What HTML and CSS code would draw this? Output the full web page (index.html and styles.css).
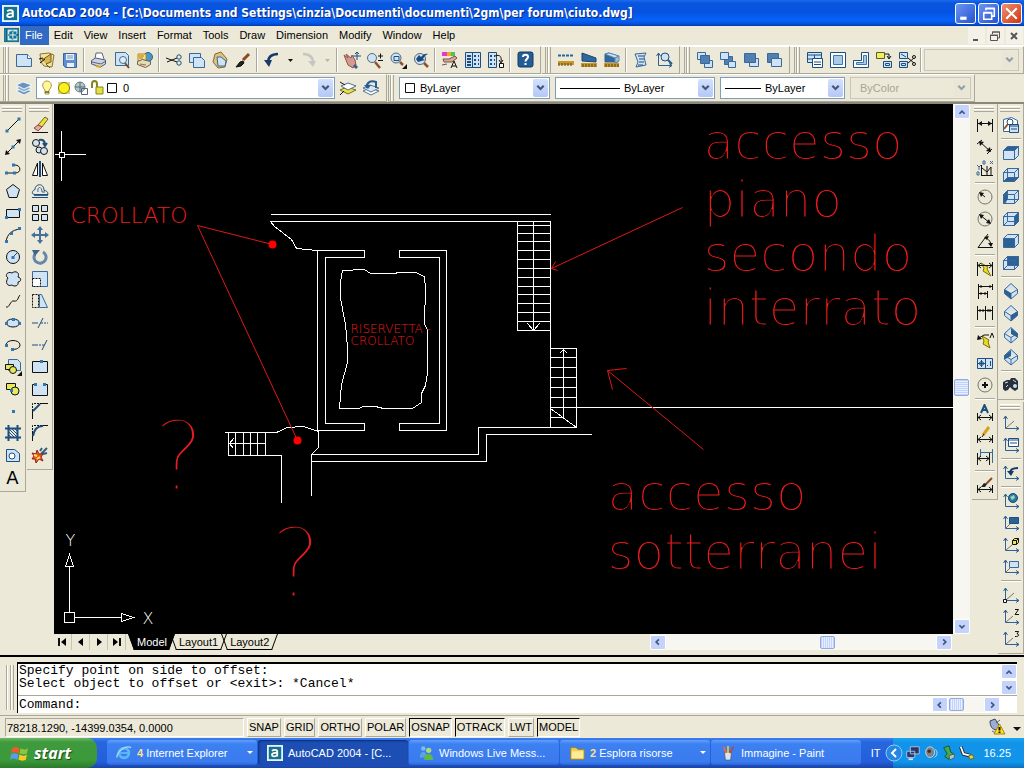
FILE: index.html
```html
<!DOCTYPE html>
<html lang="en">
<head>
<meta charset="utf-8">
<title>AutoCAD 2004 - ciuto.dwg</title>
<link rel="stylesheet" href="styles.css">
</head>
<body>
<svg class="defs" aria-hidden="true">
  <defs>
    <symbol id="down" viewBox="0 0 14 16"><path d="M4 6l3 3 3-3" class="chev"/></symbol>
    <symbol id="acad" viewBox="0 0 18 18"><rect x="1" y="1" width="16" height="16" fill="#16718c" stroke="#e4f6fa" stroke-width="2"/><path d="M5.500 6.500c2-1.500 6-1.500 6 1v5.500M11.500 9c-3-.5-6 0-6 2s4 2.500 6 .5" stroke="#fff" stroke-width="2" fill="none"/></symbol>
    <symbol id="axes" viewBox="0 0 18 18"><path d="M3.500 2v12.500H17M1.500 5l2-3 2 3M14 12.500l3 2-3 2" class="steel"/></symbol>
    <symbol id="dimline" viewBox="0 0 18 18"><path d="M1.500 9v8M16.500 9v8M2 13.500h14M5 11l-3 2.500L5 16M13 11l3 2.500-3 2.500" class="ink"/></symbol>
    <symbol id="cube" viewBox="0 0 18 18"><path d="M1.500 6.500l4-4h11v9l-4 4h-11zM1.500 6.500h11v9M12.500 6.500l4-4M5.500 3v8.500l-4 4M5.500 11.500h11" class="blue"/></symbol>
    <symbol id="iso" viewBox="0 0 18 18"><path d="M9 1.500l6.500 6v4L9 17l-6.500-5.500v-4zM2.500 7.500L9 11.500l6.500-4M9 11.500V17" class="blue sky"/></symbol>
  </defs>
</svg>

<header class="titlebar">
  <svg class="i" viewBox="0 0 18 18"><use href="#acad"/></svg>
  <h1>AutoCAD 2004 - [C:\Documents and Settings\cinzia\Documenti\documenti\2gm\per forum\ciuto.dwg]</h1>
  <div class="winbtns">
    <button aria-label="Minimize"><svg viewBox="0 0 18 18"><path d="M4 13.500h6" stroke="#fff" stroke-width="3"/></svg></button>
    <button aria-label="Restore"><svg viewBox="0 0 18 18"><path d="M6.500 6V4.500h8v7H12M4 8.500h8v6H4.500v-6M6 4h9M4 8h8" stroke="#fff" fill="none" stroke-width="1.500"/></svg></button>
    <button class="close" aria-label="Close"><svg viewBox="0 0 18 18"><path d="M4 4l10 10M14 4L4 14" stroke="#fff" stroke-width="2"/></svg></button>
  </div>
</header>

<nav class="menubar">
  <svg class="i" viewBox="0 0 18 18"><rect x="1" y="2" width="15" height="14" fill="#d6edf4" stroke="#1d7690" stroke-width="2"/><path d="M3 2v14M9.500 4v10M5 9h11" stroke="#0e6686" stroke-width="2"/><rect x="6" y="5" width="8" height="8" fill="#137493"/><path d="M10 5v8M6 9h8" stroke="#fff"/></svg>
  <button class="on">File</button><button>Edit</button><button>View</button><button>Insert</button><button>Format</button><button>Tools</button><button>Draw</button><button>Dimension</button><button>Modify</button><button>Window</button><button>Help</button>
  <div class="docbtns">
    <button aria-label="Minimize drawing"><svg viewBox="0 0 16 16"><path d="M5 12h5" stroke="#555" stroke-width="2"/></svg></button>
    <button aria-label="Restore drawing"><svg viewBox="0 0 16 16"><path d="M5.500 6V4h7v6H11M3.500 7.500h7v5h-7zM3 7h8M5 4h8" stroke="#555" fill="none"/></svg></button>
    <button aria-label="Close drawing"><svg viewBox="0 0 16 16"><path d="M5 5l6 6M11 5l-6 6" stroke="#555" stroke-width="2"/></svg></button>
  </div>
</nav>

<div class="dock">
  <div class="bar">
    <i class="grip"></i>
    <button class="t" aria-label="New"><svg viewBox="0 0 18 18"><path d="M1.500 3.500h11l4 4v8h-15z" class="blue sky"/><path d="M12.500 3.500v4h4" class="blue white"/></svg></button>
    <button class="t" aria-label="Open"><svg viewBox="0 0 18 18"><path d="M2 3l9-1 5 2-2 12-8-1-3-4z" fill="#f3e2a0" stroke="#8a7330"/><path d="M4 9l9-6v8l-5 2 4 4" fill="#d8b64c" stroke="#6d5a20"/><path d="M1 8l4-1M2 12l5-4" class="ink"/></svg></button>
    <button class="t" aria-label="Save"><svg viewBox="0 0 18 18"><path d="M2.500 2.500h13v14h-11l-2-2z" fill="#5f8fd0" stroke="#3d619b"/><path d="M5 3h8v6H5zM6 12h7v4H6z" fill="#e8f1fb"/><path d="M6 5h6M6 7h6" stroke="#6c92c8"/></svg></button>
    <i class="sep"></i>
    <button class="t" aria-label="Plot"><svg viewBox="0 0 18 18"><path d="M5 8l1-6h6l2 6" class="slate white"/><path d="M1.500 9.500l4-2.500 10 2v4l-5 3-9-3z" fill="#cfd2e0" stroke="#4f5a7c"/><path d="M2 11l9 2 5-3" class="slate"/><path d="M6 15l5 1" stroke="#d4a820" stroke-width="2"/></svg></button>
    <button class="t" aria-label="Plot Preview"><svg viewBox="0 0 18 18"><path d="M2.500 1.500h10l3 3v10h-13z" class="blue sky"/><circle cx="10" cy="9" r="3.500" fill="#dbeefa" stroke="#49708e"/><path d="M12 12l4 5" stroke="#704a30" stroke-width="2"/></svg></button>
    <button class="t" aria-label="Publish"><svg viewBox="0 0 18 18"><circle cx="12" cy="6" r="4.500" fill="#4c98c8" stroke="#27638f"/><path d="M2 3h8v7H2z" fill="#ffe681" stroke="#ad8420"/><path d="M1.500 10.500l5-2 8 2v3l-5 3-8-3z" fill="#e5dcb2" stroke="#5b6070"/><path d="M3 5h5M3 7h4M4 13l6 1" stroke="#bb6918"/></svg></button>
    <i class="sep"></i>
    <button class="t" aria-label="Cut"><svg viewBox="0 0 18 18"><path d="M1 7l11 4M2 11l10-4" class="ink"/><circle cx="14" cy="6" r="2.200" class="navy"/><circle cx="14" cy="12" r="2.200" class="navy"/></svg></button>
    <button class="t" aria-label="Copy"><svg viewBox="0 0 18 18"><path d="M1.500 2.500h11v9h-11z" class="blue sky"/><path d="M5.500 6.500h8l3 3v7h-11z" class="blue sky"/></svg></button>
    <button class="t" aria-label="Paste"><svg viewBox="0 0 18 18"><path d="M4 3l6-2 6 7-2 8-7 1-5-6z" fill="#dfc17a" stroke="#806b36"/><path d="M6 6h4l5 4-1 5H7z" class="blue sky"/></svg></button>
    <button class="t" aria-label="Match Properties"><svg viewBox="0 0 18 18"><path d="M9 9l6-6" stroke="#8a4a22" stroke-width="3"/><path d="M2 16l4-5 3-1 1 2-3 3z" class="ink" fill="#222"/></svg></button>
    <i class="sep"></i>
    <button class="t" aria-label="Undo"><svg viewBox="0 0 18 18"><path d="M5 12c0-6 4-9 10-9" stroke="#173b69" stroke-width="2.500" fill="none"/><path d="M1 9h8l-3 7z" fill="#173b69"/></svg></button>
    <button class="t slim" aria-label="Undo list"><svg viewBox="0 0 10 18"><path d="M3 8h5l-2.500 3z" fill="#111"/></svg></button>
    <button class="t" aria-label="Redo" disabled><svg viewBox="0 0 18 18"><path d="M3 3c6 0 10 3 10 9" stroke="#c6c6c0" stroke-width="2.500" fill="none"/><path d="M8 10h8l-3 6z" fill="#c6c6c0"/></svg></button>
    <button class="t slim" aria-label="Redo list" disabled><svg viewBox="0 0 10 18"><path d="M3 8h5l-2.500 3z" fill="#b8b6a8"/></svg></button>
    <i class="sep"></i>
    <button class="t" aria-label="Pan"><svg viewBox="0 0 18 18"><path d="M1 4l4 3-2-4 5 4 1-3 3 5 1 5-3 3-5-3z" fill="#d49a92" stroke="#925248"/><path d="M14 1v8M10 5h8M12 3l2-2 2 2" class="navy"/><path d="M11 14l3 3" stroke="#385f89" stroke-width="3"/></svg></button>
    <button class="t" aria-label="Zoom Realtime"><svg viewBox="0 0 18 18"><circle cx="6" cy="7" r="4.500" class="slate sky"/><path d="M9 11l5 6" stroke="#8b522d" stroke-width="2.500"/><path d="M12 5h5M14.500 2.500v5M12 9.500h5" class="ink"/></svg></button>
    <button class="t" aria-label="Zoom Window"><svg viewBox="0 0 18 18"><circle cx="7" cy="7" r="5" class="slate sky"/><path d="M5 5.500h5v4H5z" class="navy"/><path d="M11 11l3 3" stroke="#8b522d" stroke-width="2.500"/><path d="M18 13v5h-5z" fill="#111"/></svg></button>
    <button class="t" aria-label="Zoom Previous"><svg viewBox="0 0 18 18"><circle cx="8" cy="8" r="5.500" class="slate sky"/><path d="M4 8l3-4 2 2c2-3 5-4 7-3-3 1-4 3-5 5l2 1-7 2z" fill="#1c477b"/><path d="M12 12l4 4" stroke="#8b522d" stroke-width="2.500"/></svg></button>
    <i class="sep"></i>
    <button class="t" aria-label="Properties"><svg viewBox="0 0 18 18"><path d="M1 1h5v4H1z" fill="#e23ad0"/><path d="M6 1h4v4H6z" fill="#f3a420"/><path d="M10 1h4v4h-4z" fill="#49c65b"/><path d="M2 8h6l6-3 2 2-5 4H3zM1 14l5-1" fill="#dba798" stroke="#7a5048"/><path d="M10 17l3-7 3 7M11 15h4" class="ink"/></svg></button>
    <button class="t" aria-label="DesignCenter"><svg viewBox="0 0 18 18"><path d="M1.500 1.500h15v15h-15zM8.500 2v14" class="navy sky"/><path d="M3 5h4M3 8h4M3 11h4M3 14h4M10 5h2M14 5h1M10 9h2M14 9h1M10 13h2M14 13h1" class="navy w2"/></svg></button>
    <button class="t" aria-label="Tool Palettes"><svg viewBox="0 0 18 18"><path d="M1.500 1.500h8v15h-8z" class="navy sky"/><path d="M3 5h2M7 5h1M3 9h2M7 9h1M3 13h2M7 13h1" class="navy w2"/><path d="M8 5c5-2 7 1 6 6M12 9l2 3 2-3" class="ink"/><path d="M12.500 12.500h4v4h-4z" class="ink white"/></svg></button>
    <i class="sep"></i>
    <button class="t" aria-label="Help"><svg viewBox="0 0 18 18"><rect x="2" y="1" width="15" height="15" rx="2" fill="#235d94" stroke="#123a63"/><path d="M7 6c0-3 5-3 5 0 0 2-2.500 2-2.500 4.500M9.500 12v2" stroke="#fff" stroke-width="2" fill="none"/></svg></button>
  </div>
  <div class="bar">
    <i class="grip"></i>
    <button class="t" aria-label="Distance"><svg viewBox="0 0 18 18"><path d="M1 4.500h16" stroke="#2a6498" stroke-width="2" stroke-dasharray="3 1"/><path d="M1 10h16v4H1z" fill="#c8982c"/><path d="M2 12v3M5 12v3M8 12v3M11 12v3M14 12v3" stroke="#5e430c"/></svg></button>
    <button class="t" aria-label="Area"><svg viewBox="0 0 18 18"><path d="M2 10V2l14 5v4z" fill="#2f679f" stroke="#1b456f"/><path d="M1 12h16v4H1z" fill="#c8982c"/><path d="M3 13v3M6 13v3M9 13v3M12 13v3M15 13v3" stroke="#5e430c"/></svg></button>
    <button class="t" aria-label="Mass Properties"><svg viewBox="0 0 18 18"><path d="M2 11V3l4-1 9 3v6z" fill="#2f679f" stroke="#365f88"/><path d="M2 3l4-1 10 3-4 2z" fill="#cfe3f4" stroke="#5f88ae"/><path d="M12 7l4-2v5l-4 2z" fill="#9cc1e0" stroke="#5f88ae"/><path d="M1 12h15v4H1z" fill="#c8982c"/><path d="M3 13v3M6 13v3M9 13v3M12 13v3M15 13v3" stroke="#5e430c"/></svg></button>
    <i class="sep"></i>
    <button class="t" aria-label="List"><svg viewBox="0 0 18 18"><path d="M3 3l11-1-2 4 2 8-10 2 2-5z" class="blue sky"/><path d="M6 5h6M7 8h5M7 11h5M6 14h5" class="navy"/></svg></button>
    <button class="t" aria-label="Locate Point"><svg viewBox="0 0 18 18"><use href="#axes"/><circle cx="10" cy="6" r="4" class="navy sky"/><path d="M13 9l4 4" stroke="#245887" stroke-width="2"/></svg></button>
  </div>
  <div class="bar">
    <i class="grip"></i>
    <button class="t" aria-label="Bring to Front"><svg viewBox="0 0 18 18"><path d="M1.500 1.500h8v7h-8zM8.500 9.500h8v7h-8z" class="blue sky"/><path d="M4.500 4.500h9v8h-9z" class="blue steelf"/></svg></button>
    <button class="t" aria-label="Send to Back"><svg viewBox="0 0 18 18"><path d="M5.500 5.500h8v8h-8z" class="blue steelf"/><path d="M1.500 1.500h8v7h-8zM9.500 10.500h7v6h-7z" class="blue sky"/></svg></button>
    <button class="t" aria-label="Bring Above"><svg viewBox="0 0 18 18"><path d="M7.500 7.500h9v8h-9z" class="blue sky"/><path d="M2.500 2.500h11v9h-11z" class="blue steelf"/></svg></button>
    <button class="t" aria-label="Send Under"><svg viewBox="0 0 18 18"><path d="M2.500 2.500h11v9h-11z" class="blue steelf"/><path d="M6.500 7.500h10v8h-10z" class="blue sky"/></svg></button>
  </div>
  <div class="bar grow">
    <i class="grip"></i>
    <button class="t" aria-label="Viewports Dialog"><svg viewBox="0 0 18 18"><path d="M1.500 1.500h14v10h-14zM1.500 4h14M8.500 4v7M1.500 8h7" class="navy sky"/><path d="M6.500 7.500h10v9h-10z" class="navy white"/><path d="M8 11h7M8 13.500h7" class="navy"/></svg></button>
    <button class="t" aria-label="Single Viewport"><svg viewBox="0 0 18 18"><path d="M1.500 1.500h15v15h-15z" class="navy white"/><path d="M4.500 4.500h9v9h-9z" fill="#a9cbe8" stroke="#3d77ab"/></svg></button>
    <button class="t" aria-label="Polygonal Viewport"><svg viewBox="0 0 18 18"><path d="M9.500 1.500h7v15h-15v-7h8z" class="navy white"/><path d="M11.500 4.500h3v9h-10v-2h7z" fill="#a9cbe8" stroke="#3d77ab"/></svg></button>
    <button class="t" aria-label="Convert to Viewport"><svg viewBox="0 0 18 18"><path d="M1.500 1.500h8v6h-8z" fill="#f2ee62" stroke="#55601c"/><path d="M10 3h4v4M12 5l2 3 2-3" class="ink"/><path d="M8.500 10.500h8v6h-8zM10.500 12.500h4v2h-4z" class="navy sky"/></svg></button>
    <button class="t" aria-label="Clip Viewport"><svg viewBox="0 0 18 18"><path d="M1.500 1.500h8v6h-8zM1.500 10.500h8v6h-8zM3.500 12.500h4v2h-4zM3 3l5 3" class="navy sky"/><path d="M10 7l6 5M10 12l6-5" class="ink"/><circle cx="16" cy="6" r="1.500" class="ink"/><circle cx="16" cy="13" r="1.500" class="ink"/></svg></button>
    <i class="sep"></i>
    <span class="combo off grow"><select disabled aria-label="Viewport scale"><option></option></select><svg class="arrow"><use href="#down"/></svg></span>
  </div>
</div>

<div class="dock second">
  <div class="bar">
    <i class="grip"></i>
    <button class="t" aria-label="Layer Properties"><svg viewBox="0 0 18 18"><path d="M1 12l7-3 9 3-8 4z" fill="#6e97bf" stroke="#f3f6f8"/><path d="M1 9l7-3 9 3-8 4z" fill="#8eb0cf" stroke="#f3f6f8"/><path d="M1 6l7-3 9 3-8 4z" fill="#6a94be" stroke="#f3f6f8"/></svg></button>
    <span class="combo layer">
      <svg class="lead" viewBox="0 0 78 18"><path d="M4 11c-5-5-1-9 2-9s7 4 2 9v4H4z" fill="#fff79a" stroke="#a89b3d"/><path d="M4 13h4" class="ink"/><path d="M17 3h12v12H17z" fill="#d9d77a"/><circle cx="23" cy="9" r="5.500" fill="#fff11c" stroke="#7f7a2b"/><circle cx="39" cy="8" r="5" fill="#b4cbc4" stroke="#668379"/><path d="M39 3v10M34 8h10M40.500 9.500h6v6h-6z" class="slate"/><path d="M51 9V5c0-4 5-4 5 0v4" fill="none" stroke="#85851e" stroke-width="2"/><path d="M55 8h7v7h-7z" fill="#e4e140" stroke="#85851e"/><path d="M66.500 4.500h9v9h-9z" class="ink white"/></svg>
      <select aria-label="Layer"><option>0</option></select><svg class="arrow"><use href="#down"/></svg>
    </span>
    <button class="t" aria-label="Make Object's Layer Current"><svg viewBox="0 0 18 18"><path d="M1 11l7-3 9 3-8 4z" fill="#e8df49" stroke="#756f24"/><path d="M2 7l7-3 8 3-8 4z" fill="#fff" stroke="#507089"/><path d="M1 3l5 3M1 16l4-4" class="ink"/></svg></button>
    <button class="t" aria-label="Layer Previous"><svg viewBox="0 0 18 18"><path d="M1 12l7-3 9 3-8 4z" fill="#fff" stroke="#547594"/><path d="M1 9l7-3 9 3-8 4z" fill="#d8e6f2" stroke="#547594"/><path d="M5 9C4 4 8 1 14 3v6" stroke="#245d96" stroke-width="2" fill="none"/><path d="M2 6h7l-3 4z" fill="#245d96"/></svg></button>
  </div>
  <div class="bar props">
    <i class="grip"></i>
    <span class="combo color"><svg class="lead" viewBox="0 0 12 18"><path d="M1.500 4.500h9v9h-9z" class="ink white"/></svg><select aria-label="Color"><option>ByLayer</option></select><svg class="arrow"><use href="#down"/></svg></span>
    <span class="combo ltype"><i class="rule"></i><select aria-label="Linetype"><option>ByLayer</option></select><svg class="arrow"><use href="#down"/></svg></span>
    <span class="combo lweight"><i class="rule"></i><select aria-label="Lineweight"><option>ByLayer</option></select><svg class="arrow"><use href="#down"/></svg></span>
    <span class="combo off plot"><select disabled aria-label="Plot style"><option>ByColor</option></select><svg class="arrow"><use href="#down"/></svg></span>
  </div>
</div>

<main class="work">
  <div class="rail">
    <div class="vbar">
      <i class="grip"></i>
      <button class="t" aria-label="Line"><svg viewBox="0 0 18 18"><path d="M3 15L15 3" class="ink"/><path d="M1.500 13.500h3v3h-3zM13.500 1.500h3v3h-3z" class="dot"/></svg></button>
      <button class="t" aria-label="Construction Line"><svg viewBox="0 0 18 18"><path d="M2 16L16 2" class="ink"/><path d="M1 17l1-5 4 4zM17 1l-5 1 4 4z" fill="#111"/><path d="M7.500 7.500h3v3h-3z" class="dot"/></svg></button>
      <button class="t" aria-label="Polyline"><svg viewBox="0 0 18 18"><path d="M2 13h9c7 0 6-8 0-8H9" class="ink"/><path d="M1 11.500h3v3H1zM9 11.500h3v3H9zM8 3.500h3v3H8z" class="dot"/></svg></button>
      <button class="t" aria-label="Polygon"><svg viewBox="0 0 18 18"><path d="M9 2.500l6.500 5-2.500 8H5l-2.500-8z" class="ink sky"/></svg></button>
      <button class="t" aria-label="Rectangle"><svg viewBox="0 0 18 18"><path d="M2.500 5.500h13v8h-13z" class="ink sky"/><path d="M1 12h3v3H1zM14 4h3v3h-3z" class="dot"/></svg></button>
      <button class="t" aria-label="Arc"><svg viewBox="0 0 18 18"><path d="M2 16C3 8 8 4 16 3" class="ink"/><path d="M1 14h3v3H1zM6 6h3v3H6zM14 1h3v3h-3z" class="dot"/></svg></button>
      <button class="t" aria-label="Circle"><svg viewBox="0 0 18 18"><circle cx="9" cy="9" r="6.500" class="ink sky"/><path d="M9 9l4-4" class="navy"/><path d="M7.500 8h3v3h-3z" class="dot"/></svg></button>
      <button class="t" aria-label="Revision Cloud"><svg viewBox="0 0 18 18"><path d="M4 8c-4-3 0-7 4-5 4-3 8 0 6 4 4 1 3 5 0 5 1 4-4 5-6 3-5 2-7-3-4-7z" class="ink sky"/></svg></button>
      <button class="t" aria-label="Spline"><svg viewBox="0 0 18 18"><path d="M2 15c4 1 4-7 8-6s4-4 6-6" class="ink"/></svg></button>
      <button class="t" aria-label="Ellipse"><svg viewBox="0 0 18 18"><ellipse cx="9" cy="9" rx="6.500" ry="4" class="ink sky"/><path d="M1 8h3v3H1zM14 8h3v3h-3zM8 4h3v3H8z" class="dot"/></svg></button>
      <button class="t" aria-label="Ellipse Arc"><svg viewBox="0 0 18 18"><path d="M2 9c0-6 14-6 14 0 0 3-4 5-8 4" class="ink"/><path d="M1 8h3v3H1zM7 12h3v3H7z" class="dot"/></svg></button>
      <button class="t" aria-label="Insert Block"><svg viewBox="0 0 18 18"><path d="M4.500 1.500h9l3 3v8h-12z" class="blue sky"/><path d="M1.500 6.500h8v5h-8z" class="ink yel"/><circle cx="9" cy="12" r="3.500" class="ink yel"/><path d="M18 13v5h-5z" fill="#111"/></svg></button>
      <button class="t" aria-label="Make Block"><svg viewBox="0 0 18 18"><path d="M2.500 3.500h9v6h-9z" class="ink yel"/><circle cx="11" cy="11" r="4" class="ink yel"/><path d="M6 9h3v3H6z" class="dot"/></svg></button>
      <button class="t" aria-label="Point"><svg viewBox="0 0 18 18"><path d="M8 8h3v3H8z" class="dot"/></svg></button>
      <button class="t" aria-label="Hatch"><svg viewBox="0 0 18 18"><path d="M4.500 1v16M13.500 1v16M1 4.500h16M1 13.500h16" class="navy w2"/><path d="M5 8l5 5M5 5l8 8M8 5l5 5M5 11l2 2M11 5l2 2" class="navy"/></svg></button>
      <button class="t" aria-label="Region"><svg viewBox="0 0 18 18"><path d="M2.500 3.500h8l5 4v8h-13z" class="navy sky"/><circle cx="8" cy="10" r="3" class="navy white"/></svg></button>
      <button class="t text" aria-label="Multiline Text">A</button>
    </div>
    <div class="vbar">
      <i class="grip"></i>
      <button class="t" aria-label="Erase"><svg viewBox="0 0 18 18"><path d="M7 9l7-8 3 2-6 8z" fill="#efe03f" stroke="#6e6420"/><path d="M3 12l4-3 4 2-4 4z" fill="#efa5a0" stroke="#824c48"/><path d="M1 16.500h16" class="ink"/></svg></button>
      <button class="t" aria-label="Copy Object"><svg viewBox="0 0 18 18"><circle cx="5" cy="5" r="3.500" class="ink sky"/><circle cx="8" cy="12" r="3" class="ink sky"/><circle cx="13" cy="13" r="3.500" class="ink sky"/><path d="M8 2c4-1 6 1 6 5M12 5l2 3 2-3" class="navy w2"/></svg></button>
      <button class="t" aria-label="Mirror"><svg viewBox="0 0 18 18"><path d="M6.500 3v12.500h-5z" class="ink white"/><path d="M11.500 3v12.500h5z" class="ink white"/><path d="M9 1v16" class="navy w2"/></svg></button>
      <button class="t" aria-label="Offset"><svg viewBox="0 0 18 18"><path d="M1 15.500h16M17 12.500c0-3-2-4-4-4 0-8-9-7-9-1-3 1-4 5 0 5h13" class="navy"/><path d="M3 13.500h14M7 10c-1-6 4-6 4 0h3" class="blue"/></svg></button>
      <button class="t" aria-label="Array"><svg viewBox="0 0 18 18"><path d="M1.500 1.500h6v6h-6zM10.500 1.500h6v6h-6zM1.500 10.500h6v6h-6zM10.500 10.500h6v6h-6z" class="ink sky"/></svg></button>
      <button class="t" aria-label="Move"><svg viewBox="0 0 18 18"><path d="M9 2v14M2 9h14" stroke="#466f9c" stroke-width="2"/><path d="M9 0l3 4H6zM9 18l3-4H6zM0 9l4-3v6zM18 9l-4-3v6z" fill="#466f9c"/></svg></button>
      <button class="t" aria-label="Rotate"><svg viewBox="0 0 18 18"><path d="M12 4a6 6 0 1 1-8 2" stroke="#6488aa" stroke-width="3" fill="none"/><path d="M1 2l8 0-5 6z" fill="#3d668f"/></svg></button>
      <button class="t" aria-label="Scale"><svg viewBox="0 0 18 18"><path d="M1.500 1.500h15v15h-15z" class="blue sky"/><path d="M1.500 8.500h8v8h-8z" class="ink white dash"/></svg></button>
      <button class="t" aria-label="Stretch"><svg viewBox="0 0 18 18"><path d="M1.500 2.500h6v13h-6z" class="ink dash"/><path d="M8.500 2.500h2l6 13h-8z" class="blue sky"/></svg></button>
      <button class="t" aria-label="Trim"><svg viewBox="0 0 18 18"><path d="M1 9h6M7 14l5-10" class="navy"/><path d="M10 9h7" class="navy dash"/></svg></button>
      <button class="t" aria-label="Extend"><svg viewBox="0 0 18 18"><path d="M1 9h6M11 14l5-10" class="navy"/><path d="M8 9h6" class="navy dash"/></svg></button>
      <button class="t" aria-label="Break at Point"><svg viewBox="0 0 18 18"><path d="M1.500 3.500h15v11h-15z" class="ink sky"/><path d="M9 2h3v3H9z" class="dot"/></svg></button>
      <button class="t" aria-label="Break"><svg viewBox="0 0 18 18"><path d="M4 4.500H1.500v11h15v-11H14" class="ink sky"/><path d="M3 3h3v3H3zM12 3h3v3h-3z" class="dot"/></svg></button>
      <button class="t" aria-label="Chamfer"><svg viewBox="0 0 18 18"><path d="M1.500 17V9M9 1.500h8" class="ink"/><path d="M1.500 9V1.500H9" class="ink dash"/><path d="M2 9l7-7" class="navy w2"/></svg></button>
      <button class="t" aria-label="Fillet"><svg viewBox="0 0 18 18"><path d="M1.500 17V9M9 1.500h8" class="ink"/><path d="M1.500 9V1.500H9" class="ink dash"/><path d="M2 12C3 6 6 2 12 2" class="navy w2"/></svg></button>
      <button class="t" aria-label="Explode"><svg viewBox="0 0 18 18"><path d="M10 8l6-6M12 8l4-1M9 5l2-3" stroke="#385d7c" stroke-width="2"/><path d="M1 7l4 1 1-4 2 4 4 0-2 3 2 4-4-2-3 4-1-4-3 0 2-3z" fill="#e65b25" stroke="#961f15"/><path d="M3 9l3 1M6 13l3-2" stroke="#ffe455" stroke-width="2"/></svg></button>
    </div>
  </div>

  <section class="doc">
    <div class="view">
      <svg class="drawing" viewBox="53.5 103.500 899 530" preserveAspectRatio="xMinYMin meet" role="img" aria-label="Floor plan">
        <g class="plan">
          <path d="M270 214h280M270 221h280M550 221v206M517 221v109h33M533 221v109M527 323l6 7 6-7"/>
          <path d="M517 225h33M517 233h33M517 241h33M517 250h33M517 259h33M517 268h33M517 277h33M517 286h33M517 294h33M517 303h33M517 312h33M517 321h33"/>
          <path d="M550 348h26v79M550 357h26M550 367h26M550 377h26M550 387h26M550 397h26M550 407h403M550 417h13M563 348v69M559 353l4-4 4 4M550 408l26 19"/>
          <path d="M576 427h-98v27H311v41M591 434H486v27H311"/>
          <path d="M270 221l4 5 17 13 5 9 21 2M317 250h47v7h-39v166h39v7h-47zM399 250h47v180h-47v-7h40V257h-40z"/>
          <path d="M342 270l22-1 6 4h25l2-1h18l9 4 1 12-1 35 3 7v42l-2 13-4 8v9l-9 6h-29l-8-2h-12l-5 2h-19l2-24 6-22v-15l-2-23-5-26v-16z"/>
          <path d="M224 432h52l11-5 16-1 15 5v16l-7 7M228 432v23h53v47M235 432v23M243 432v23M250 432v23M257 432v23M265 432v23M228 443h37M233 438l-4 5 4 5"/>
          <path d="M61 130v21M61 157v23M54 154h4M64 154h21M59 152h5v5h-5z"/>
          <path d="M64 612h10v10H64zM69 612v-46M65 566h8l-4-12zM74 617h47M121 613v8l12-4z"/>
        </g>
        <g class="note">
          <path d="M272 244l-75-19 100 215M551 268l131-61M555 261l-4 7 6 2M703 449l-96-79M626 368l-19 2 5 19"/>
          <circle cx="272" cy="244" r="4"/><circle cx="297" cy="440" r="4"/>
        </g>
        <g class="big">
          <text x="703" y="158">accesso</text><text x="703" y="216">piano</text><text x="703" y="270">secondo</text><text x="703" y="324">interrato</text>
          <text x="607" y="509">accesso</text><text x="607" y="568">sotterranei</text>
        </g>
        <text class="mid" x="70" y="222">CROLLATO</text>
        <text class="small" x="350" y="332">RISERVETTA -</text><text class="small" x="350" y="344">CROLLATO</text>
        <text class="query" x="153" y="489">?</text><text class="query" x="270" y="596">?</text>
        <text class="axis" x="65" y="545">Y</text><text class="axis" x="142" y="623">X</text>
      </svg>
      <div class="scroll v"><button aria-label="Scroll up"><svg viewBox="0 0 14 16"><path d="M4 10l3-3 3 3" class="chev"/></svg></button><i class="thumb"></i><button aria-label="Scroll down"><svg><use href="#down"/></svg></button></div>
    </div>
    <div class="tabs">
      <button class="nav" aria-label="First tab"><svg viewBox="0 0 18 16"><path d="M5 4v8" class="ink w2"/><path d="M12 4v8L7 8z"/></svg></button>
      <button class="nav" aria-label="Previous tab"><svg viewBox="0 0 18 16"><path d="M11 4v8L6 8z"/></svg></button>
      <button class="nav" aria-label="Next tab"><svg viewBox="0 0 18 16"><path d="M7 4v8l5-4z"/></svg></button>
      <button class="nav" aria-label="Last tab"><svg viewBox="0 0 18 16"><path d="M12 4v8" class="ink w2"/><path d="M5 4v8l5-4z"/></svg></button>
      <button class="tab on">Model</button><button class="tab">Layout1</button><button class="tab">Layout2</button>
      <div class="scroll h"><button aria-label="Scroll left"><svg viewBox="0 0 14 16"><path d="M8 5L5 8l3 3" class="chev"/></svg></button><i class="thumb"></i><button aria-label="Scroll right"><svg viewBox="0 0 14 16"><path d="M6 5l3 3-3 3" class="chev"/></svg></button></div>
    </div>
  </section>

  <div class="rail right">
    <div class="vbar">
      <i class="grip"></i>
      <button class="t" aria-label="Linear Dimension"><svg viewBox="0 0 18 18"><path d="M1.500 3v13M16.500 3v13M2 7.500h14" class="ink"/><path d="M2 7.500L6 5v5zM16 7.500L12 5v5z" fill="#111"/></svg></button>
      <button class="t" aria-label="Aligned Dimension"><svg viewBox="0 0 18 18"><path d="M4 4l10 9M1 6l5-4M11 16l5-5" class="ink"/><path d="M3 3l5 1-4 4zM15 14l-5-1 4-4z" fill="#111"/></svg></button>
      <button class="t" aria-label="Ordinate Dimension"><svg viewBox="0 0 18 18"><path d="M5.500 5v11M5 15.500h12M6 8l5 4 4-5v9M11 6v9" class="ink"/><path d="M1 5l2 2 2-2M3 7v3M14 1l3 3M17 1l-3 3M1 12h2v3H1zM7 1h2v3H7z" class="blue"/></svg></button>
      <i class="sep"></i>
      <button class="t" aria-label="Radius Dimension"><svg viewBox="0 0 18 18"><circle cx="9" cy="9" r="7" class="grey"/><path d="M4 5l5 4" class="ink"/><path d="M3 4l5 1-3 4z" fill="#111"/></svg></button>
      <button class="t" aria-label="Diameter Dimension"><svg viewBox="0 0 18 18"><circle cx="9" cy="9" r="7" class="grey"/><path d="M4 5l10 8" class="ink"/><path d="M3 4l5 1-3 4zM15 14l-5-1 3-4z" fill="#111"/></svg></button>
      <button class="t" aria-label="Angular Dimension"><svg viewBox="0 0 18 18"><path d="M12 2L2 15.500h15M9 6c4 1 6 4 6 8" class="ink"/><path d="M8 5l5-1-2 4zM15 15l-3-4h5z" fill="#111"/></svg></button>
      <i class="sep"></i>
      <button class="t" aria-label="Quick Dimension"><svg viewBox="0 0 18 18"><path d="M5 3l7 4-1 2 4 7-8-5 1-3z" fill="#eadc20" stroke="#77700f"/><path d="M1.500 2v14M16.500 2v14M2 5.500h14M5 3L2 5.500 5 8M13 3l3 2.500L13 8" class="ink"/></svg></button>
      <button class="t" aria-label="Baseline Dimension"><svg viewBox="0 0 18 18"><path d="M2.500 2v15M16.500 2v6M11.500 9v7M3 4.500h13M3 11.500h8M5 3v3M14 3v3M5 10v3M9 10v3" class="ink"/></svg></button>
      <button class="t" aria-label="Continue Dimension"><svg viewBox="0 0 18 18"><path d="M1.500 2v14M9.500 2v14M16.500 2v14M2 6.500h14M4 5v3M7 5v3M12 5v3M14 5v3" class="ink"/></svg></button>
      <i class="sep"></i>
      <button class="t" aria-label="Quick Leader"><svg viewBox="0 0 18 18"><path d="M6 4l7 4-1 2 2 6-7-4 1-3z" fill="#eadc20" stroke="#77700f"/><path d="M3 6l5-3h5M14 6l2-5 2 5" class="ink"/><path d="M1 8l1-5 4 4z" fill="#111"/></svg></button>
      <button class="t" aria-label="Tolerance"><svg viewBox="0 0 18 18"><path d="M1.500 4.500h15v10h-15zM9.500 4.500v10" class="navy sky"/><circle cx="5.500" cy="9.500" r="2" class="navy"/><path d="M2 9.500h7M5.500 6v7M11.500 11v1M14.500 7v5" class="navy"/></svg></button>
      <button class="t" aria-label="Center Mark"><svg viewBox="0 0 18 18"><circle cx="9" cy="9" r="7" class="grey"/><path d="M6 9h6M9 6v6" class="ink w2"/></svg></button>
      <i class="sep"></i>
      <button class="t" aria-label="Dimension Edit"><svg viewBox="0 0 18 18"><use href="#dimline"/><path d="M5 9l3.500-8L12 9M6 6h5" class="navy w2"/></svg></button>
      <button class="t" aria-label="Dimension Text Edit"><svg viewBox="0 0 18 18"><use href="#dimline"/><path d="M7 9l6-8" stroke="#d6a21e" stroke-width="3"/><path d="M6 11l2-3" class="ink"/></svg></button>
      <button class="t" aria-label="Dimension Update"><svg viewBox="0 0 18 18"><path d="M4.500 1v8M16.500 1v14M5 4.500h12" class="blue"/><path d="M1.500 5v12M13.500 5v12M2 10.500h11M5 8L2 10.500 5 13M10 8l3 2.500-3 2.500" class="ink"/></svg></button>
      <i class="sep"></i>
      <button class="t" aria-label="Dimension Style"><svg viewBox="0 0 18 18"><use href="#dimline"/><path d="M10 8l6-6" stroke="#8a4a22" stroke-width="2"/><path d="M5 11l3-4 3 1-2 3z" fill="#222"/></svg></button>
    </div>
    <div class="stack">
      <div class="vbar">
        <i class="grip"></i>
        <button class="t" aria-label="Named Views"><svg viewBox="0 0 18 18"><path d="M1.500 3.500l8-2 6 3v11h-14z" class="blue white"/><path d="M7.500 8.500h9v8h-9zM7.500 10h9M9 13h6" class="navy sky"/><circle cx="8" cy="6" r="3" class="navy"/><path d="M6 8l-4 5" stroke="#8b522d" stroke-width="2"/></svg></button>
        <i class="sep"></i>
        <button class="t" aria-label="Top View"><svg viewBox="0 0 18 18"><path d="M1.500 6.500h11v9h-11zM12.500 6.500l4-4v9l-4 4z" class="blue sky"/><path d="M1.500 6.500l4-4h11l-4 4z" class="blue deep"/></svg></button>
        <button class="t" aria-label="Bottom View"><svg viewBox="0 0 18 18"><path d="M1.500 6.500l4-4h11v9l-4 4h-11z" class="blue sky"/><path d="M1.500 15.500l4-4h11l-4 4z" class="blue deep"/><use href="#cube"/></svg></button>
        <button class="t" aria-label="Left View"><svg viewBox="0 0 18 18"><path d="M5.500 2.500h11v9l-4 4h-9z" class="blue sky"/><path d="M1.500 6.500l4-4v9l-4 4z" class="blue deep"/><use href="#cube"/></svg></button>
        <button class="t" aria-label="Right View"><svg viewBox="0 0 18 18"><path d="M1.500 6.500l4-4h11l-4 13h-11z" class="blue sky"/><path d="M12.500 6.500l4-4v9l-4 4z" class="blue deep"/><use href="#cube"/></svg></button>
        <button class="t" aria-label="Front View"><svg viewBox="0 0 18 18"><path d="M1.500 6.500l4-4h11v9l-4 4z" class="blue sky"/><path d="M12.500 6.500l4-4" class="blue"/><path d="M1.500 6.500h11v9h-11z" class="blue deep"/></svg></button>
        <button class="t" aria-label="Back View"><svg viewBox="0 0 18 18"><path d="M1.500 6.500l4-4h11v9l-4 4h-11z" class="blue sky"/><path d="M5.500 2.500h11v9h-11z" class="blue deep"/><use href="#cube"/></svg></button>
        <i class="sep"></i>
        <button class="t" aria-label="SW Isometric"><svg viewBox="0 0 18 18"><use href="#iso"/><path d="M2.500 7.500l6.500 4V17l-6.500-5.500z" class="deep"/></svg></button>
        <button class="t" aria-label="SE Isometric"><svg viewBox="0 0 18 18"><use href="#iso"/><path d="M15.500 7.500l-6.500 4V17l6.500-5.500z" class="deep"/></svg></button>
        <button class="t" aria-label="NE Isometric"><svg viewBox="0 0 18 18"><use href="#iso"/><path d="M9 2l6.500 5.500v4L9 8z" class="deep"/></svg></button>
        <button class="t" aria-label="NW Isometric"><svg viewBox="0 0 18 18"><use href="#iso"/><path d="M9 2L2.500 7.500v4L9 8z" class="deep"/></svg></button>
        <i class="sep"></i>
        <button class="t" aria-label="Camera"><svg viewBox="0 0 18 18"><path d="M1 6l4-2h3l1-2h4l3 3v8l-3 2-3-2-2-2-2 3-3 1-2-2z" fill="#26313d"/><circle cx="13" cy="10" r="2" fill="#cadbe9"/><path d="M3 7l3-1M11 4l3 2M4 11l2-2" stroke="#d7dfe6"/></svg></button>
      </div>
      <div class="vbar">
        <i class="grip"></i>
        <button class="t" aria-label="UCS"><svg viewBox="0 0 18 18"><use href="#axes"/><path d="M4 14l8-7" class="grey"/></svg></button>
        <button class="t" aria-label="Display UCS Dialog"><svg viewBox="0 0 18 18"><use href="#axes"/><path d="M6.500 2.500h10v8h-10z" class="navy white"/><path d="M6.500 4h10M8 7h7" class="navy"/></svg></button>
        <i class="sep"></i>
        <button class="t" aria-label="UCS Previous"><svg viewBox="0 0 18 18"><use href="#axes"/><path d="M8 9c0-4 3-5 8-5" stroke="#173b69" stroke-width="2" fill="none"/><path d="M5 7h7l-3 5z" fill="#173b69"/></svg></button>
        <i class="sep"></i>
        <button class="t" aria-label="World UCS"><svg viewBox="0 0 18 18"><use href="#axes"/><circle cx="11" cy="6" r="4.500" fill="#2877a5" stroke="#174b70"/><path d="M8 5l4-2 1 3-3 2z" fill="#9fd0b4"/></svg></button>
        <button class="t" aria-label="Object UCS"><svg viewBox="0 0 18 18"><use href="#axes"/><path d="M7.500 3.500h9v6h-9z" class="navy deep"/><path d="M4 14l4-4" class="grey"/></svg></button>
        <button class="t" aria-label="Face UCS"><svg viewBox="0 0 18 18"><use href="#axes"/><path d="M10.500 4.500l2-2h4v4l-2 2h-4zM10.500 4.500h4v4M14.500 4.500l2-2" class="ink yel"/><path d="M4 14l6-5" class="grey"/></svg></button>
        <button class="t" aria-label="View UCS"><svg viewBox="0 0 18 18"><use href="#axes"/><path d="M7.500 3.500h9v6h-9z" class="blue sky"/><path d="M4 14l4-4" class="grey"/></svg></button>
        <i class="sep"></i>
        <button class="t" aria-label="Origin UCS"><svg viewBox="0 0 18 18"><use href="#axes"/><path d="M4 14l8-7" class="grey"/><path d="M1.500 13.500h3v3h-3z" class="ink white"/></svg></button>
        <button class="t" aria-label="Z Axis Vector UCS"><svg viewBox="0 0 18 18"><use href="#axes"/><path d="M4 14l7-6" class="grey"/><path d="M13 1.500h3.500L13 6.500H17" class="ink"/></svg></button>
        <button class="t" aria-label="3 Point UCS"><svg viewBox="0 0 18 18"><use href="#axes"/><path d="M4 14l7-6" class="grey"/><path d="M13 1.500h3.500L15 4c3 0 2 3-2 2.500" class="ink"/></svg></button>
      </div>
    </div>
  </div>
</main>

<section class="command">
  <i class="cgrip"></i>
  <div class="cbox">
    <div class="history">
      <pre>Specify point on side to offset:
Select object to offset or &lt;exit&gt;: *Cancel*</pre>
      <div class="mini"><button aria-label="History up"><svg viewBox="0 0 14 16"><path d="M4 10l3-3 3 3" class="chev"/></svg></button><button aria-label="History down"><svg><use href="#down"/></svg></button></div>
    </div>
    <div class="prompt">
      <label for="cmd">Command:</label><input id="cmd" type="text">
      <div class="scroll h"><button aria-label="Command left"><svg viewBox="0 0 14 16"><path d="M8 5L5 8l3 3" class="chev"/></svg></button><i class="thumb"></i><button aria-label="Command right"><svg viewBox="0 0 14 16"><path d="M6 5l3 3-3 3" class="chev"/></svg></button></div>
    </div>
  </div>
</section>

<footer class="status">
  <output>78218.1290, -14399.0354, 0.0000</output>
  <button>SNAP</button><button>GRID</button><button>ORTHO</button><button>POLAR</button><button class="in">OSNAP</button><button class="in">OTRACK</button><button>LWT</button><button class="in">MODEL</button>
  <div class="comm">
    <svg viewBox="0 0 18 18"><path d="M2 3l5-2 6 9-4 2c-5 0-7-4-7-9z" fill="#9cafd0" stroke="#37415f"/><path d="M8 5l4-3M4 13l6 3" class="slate"/><path d="M11.500 6l5.500 10H6z" fill="#ffe21c" stroke="#a8860b"/><path d="M11.500 9v3.500M11.500 13.500V15" class="ink w2"/></svg>
    <svg viewBox="0 0 18 18"><path d="M7 9h8l-4 4z" fill="#111"/></svg>
  </div>
</footer>

<div class="taskbar">
  <button class="start"><svg viewBox="0 0 18 18"><path d="M2 4c3-2 5-1 7 0L8 9C6 8 4 7 1 9z" fill="#f0592a"/><path d="M10 4c2 1 4 2 7 0l-1 5c-2 1-4 1-7 0z" fill="#8cc63e"/><path d="M1 10c3-2 5-1 7 0l-1 5c-2-1-4-2-7 0z" fill="#5a9cf0"/><path d="M9 10c2 1 4 2 7 0l-1 5c-2 1-4 1-7 0z" fill="#fbc928"/></svg>start</button>
  <div class="tasks">
    <button><svg viewBox="0 0 18 18"><circle cx="9" cy="9" r="5.500" fill="none" stroke="#5eb9f5" stroke-width="3"/><path d="M5 9h9" stroke="#5eb9f5" stroke-width="2"/><path d="M1 14C1 7 11 0 17 3" fill="none" stroke="#a9dcf6" stroke-width="1.500"/></svg><span><b>4</b> Internet Explorer</span><i class="more"></i></button>
    <button class="on"><svg viewBox="0 0 18 18"><use href="#acad"/></svg><span>AutoCAD 2004 - [C...</span></button>
    <button><svg viewBox="0 0 18 18"><circle cx="6" cy="4" r="2.500" fill="#7fbde9"/><path d="M2 14c0-8 8-8 8 0z" fill="#5ca5dc"/><circle cx="12" cy="6" r="3" fill="#a8dc78"/><path d="M7 17c0-9 10-9 10 0z" fill="#5fb944"/></svg><span>Windows Live Mess...</span></button>
    <button><svg viewBox="0 0 18 18"><path d="M2 3h6l2 2h7v11H2z" fill="#f4cf53" stroke="#a7801a"/><path d="M3 7h13v8H3z" fill="#ffeb96"/></svg><span><b>2</b> Esplora risorse</span><i class="more"></i></button>
    <button><svg viewBox="0 0 18 18"><path d="M5 8h8l-1 9H6z" fill="#d9e5ef" stroke="#52667e"/><path d="M7 9L4 2" stroke="#ec6a3a" stroke-width="2"/><path d="M9 9V1" stroke="#e8c33c" stroke-width="2"/><path d="M11 9l4-7" stroke="#b54c35" stroke-width="2"/></svg><span>Immagine - Paint</span></button>
  </div>
  <span class="lang">IT</span>
  <div class="tray">
    <button class="hide" aria-label="Show hidden icons"><svg viewBox="0 0 18 18"><circle cx="9" cy="9" r="8" fill="#2686e4" stroke="#8ccbf8"/><path d="M11 5L7 9l4 4" fill="none" stroke="#fff" stroke-width="2"/></svg></button>
    <svg viewBox="0 0 18 18"><path d="M6 2h10v8H6zM2 7h9v7H2z" fill="#24356e" stroke="#b9c6df"/><path d="M4 16h5" stroke="#d8e3f4" stroke-width="2"/></svg>
    <svg viewBox="0 0 18 18"><ellipse cx="8" cy="8" rx="5" ry="6" fill="#7d8287" stroke="#d2d5d8"/><circle cx="7" cy="7" r="2" fill="#333"/><path d="M14 5c3 3 2 7-1 9" fill="none" stroke="#d2e4f5"/></svg>
    <svg viewBox="0 0 18 18"><path d="M3 3l6-2 2 7 3 2-5 6-5-3 3-3z" fill="#43ad48" stroke="#174e28"/><path d="M9 12l6-2v4l-5 3z" fill="#bac6cd" stroke="#4b5960"/></svg>
    <svg viewBox="0 0 18 18"><path d="M2 2l3 8 8 2" fill="none" stroke="#222" stroke-width="4"/><path d="M2 2l3 8 8 2" fill="none" stroke="#fff" stroke-width="2"/><path d="M11 12l4-1 2 4-5 1z" fill="#e8dc2c" stroke="#6d6419"/></svg>
    <time>16.25</time>
  </div>
</div>
</body>
</html>
```

FILE: styles.css
```css
* { box-sizing: border-box; }
html, body { height: 100%; }
body {
  margin: 0;
  display: flex;
  flex-direction: column;
  overflow: hidden;
  background: #ece9d8;
  color: #000;
  font: 11px "Liberation Sans", Arial, sans-serif;
}
button, select, input { font: inherit; color: inherit; border: 0; padding: 0; margin: 0; background: none; }
svg { display: block; fill: none; flex: none; }
.defs { position: absolute; width: 0; height: 0; }

/* icon paint */
.ink { stroke: #111; }
.navy { stroke: #1c4e80; }
.blue { stroke: #39689a; }
.steel { stroke: #2f6096; }
.slate { stroke: #56677f; }
.grey { stroke: #77756c; }
.w2 { stroke-width: 2; }
.dash { stroke-dasharray: 2 1; }
.sky { fill: #cfe3f4; }
.white { fill: #fff; }
.yel { fill: #e9e75a; }
.steelf { fill: #517fb0; }
.deep { fill: #2c6195; }
.dot { fill: #2f76b4; }
.chev { stroke: #3f5680; stroke-width: 2; fill: none; }

/* title bar */
.titlebar {
  display: flex;
  align-items: center;
  flex: none;
  height: 26px;
  padding: 0 2px;
  gap: 3px;
  color: #fff;
  background: linear-gradient(#1a6cf0 0, #0a55dd 3px, #0453e0 12px, #0763fb 20px, #0550d8 24px, #0338a8 26px);
}
.titlebar .i { width: 17px; height: 17px; }
.titlebar h1 {
  flex: 1;
  margin: 0;
  font: bold 12px "DejaVu Sans Condensed", "DejaVu Sans", sans-serif;
  white-space: nowrap;
  overflow: hidden;
  text-shadow: 1px 1px 0 #0a2a80;
}
.winbtns { display: flex; gap: 2px; }
.winbtns button { width: 21px; height: 21px; border: 1px solid #fff; border-radius: 3px; background: linear-gradient(135deg, #6d96f0, #2353d0); }
.winbtns .close { background: linear-gradient(135deg, #f09070, #cc3512); }
.winbtns svg { width: 19px; height: 19px; }

/* menu */
.menubar { display: flex; align-items: stretch; flex: none; height: 20px; border-bottom: 1px solid #fff; }
.menubar .i { width: 16px; height: 18px; margin: 0 0 0 4px; }
.menubar > button { padding: 0 6px 2px 5px; font-size: 11px; }
.menubar > .on { background: #316ac5; color: #fff; }
.docbtns { margin-left: auto; display: flex; gap: 2px; padding: 1px 1px; }
.docbtns button { width: 17px; background: #f4f2e8; }
.docbtns svg { width: 16px; height: 16px; }

/* toolbars */
.dock { display: flex; flex: none; gap: 1px; height: 28px; }
.dock.second { height: 30px; border-bottom: 2px solid #8b887a; }
.bar {
  display: flex;
  align-items: center;
  padding-right: 4px;
  border: solid;
  border-width: 1px 1px 1px 0;
  border-color: #fff #aca899 #aca899;
}
.bar .grip { width: 6px; margin: 0 3px; align-self: stretch; border: solid; border-width: 0 1px; border-color: #fff #aca899; background: linear-gradient(90deg, #ece9d8 1px, #aca899 1px, #aca899 2px, #fff 2px, #fff 3px, #ece9d8 3px); }
.grow { flex: 1; }
.t { display: flex; align-items: center; justify-content: center; flex: none; width: 23px; height: 22px; }
.t svg { width: 18px; height: 18px; }
.t.slim { width: 14px; }
.t.slim svg { width: 10px; }
.t.text { font: 18px "DejaVu Sans", sans-serif; }
.sep { flex: none; }
.bar .sep { width: 6px; height: 24px; background: linear-gradient(90deg, transparent 2px, #aca899 2px, #aca899 3px, #fff 3px, #fff 4px, transparent 4px); }

.combo { position: relative; display: flex; align-items: center; height: 22px; background: #fff; border: 1px solid #7f9db9; }
.combo select { flex: 1; width: 100%; height: 20px; padding-left: 4px; appearance: none; opacity: 1; }
.combo .arrow { position: absolute; right: 1px; top: 1px; width: 15px; height: 18px; background: linear-gradient(#d4e0fc, #b4c8f6); border-radius: 2px; pointer-events: none; }
.combo .lead { margin-left: 4px; height: 18px; }
.combo .rule { width: 36px; margin-left: 4px; border-top: 1px solid #000; }
.combo.off { background: #ece9d8; border-color: #c9c7ba; color: #a8a595; }
.combo.off .arrow { background: #e8e5d6; opacity: .5; }
.layer { width: 299px; margin: 0 1px; }
.layer .lead { width: 78px; }
.props { gap: 5px; padding-right: 3px; }
.props .grip { margin: 0; }
.color { width: 151px; }
.color .lead { width: 12px; }
.ltype { width: 160px; }
.ltype .rule { width: 60px; }
.lweight { width: 125px; }
.plot { width: 121px; }
.plot select { padding-left: 9px; }

/* work area */
.work { display: flex; flex: 1; min-height: 0; }
.rail { display: flex; align-items: flex-start; flex: none; gap: 1px; padding-right: 1px; }
.vbar { display: flex; flex-direction: column; align-items: center; width: 26px; padding-bottom: 3px; border: solid; border-width: 0 1px 1px 0; border-color: #aca899; }
.vbar .grip { align-self: stretch; height: 6px; margin: 2px 3px 2px 2px; border: solid; border-width: 1px 0; border-color: #fff #aca899 #aca899; background: linear-gradient(#ece9d8 1px, #aca899 1px, #aca899 2px, #fff 2px, #fff 3px, #ece9d8 3px); }
.vbar .sep { height: 6px; width: 20px; background: linear-gradient(transparent 2px, #aca899 2px, #aca899 3px, #fff 3px, #fff 4px, transparent 4px); }
.rail.right { padding: 0 0 0 2px; gap: 0; }
.stack { display: flex; flex-direction: column; gap: 2px; }
.doc { display: flex; flex-direction: column; flex: 1; min-width: 0; }
.view { display: flex; flex: 1; min-height: 0; background: #000; }
.drawing { flex: 1; min-width: 0; height: 100%; background: #000; }
.plan path { stroke: #fff; shape-rendering: crispEdges; }
.note path { stroke: #e01818; }
.note circle { fill: #f00; }
.drawing text { font-family: "DejaVu Sans Light", "DejaVu Sans", sans-serif; font-weight: 200; fill: #e81c1c; }
.drawing .big text { font-size: 50px; stroke: #000; stroke-width: 1px; }
.drawing .mid { font-size: 22px; }
.drawing .small { font-size: 12px; }
.drawing .query { font-size: 96px; stroke: #000; stroke-width: 3px; }
.drawing .axis { font-size: 16px; fill: #fff; }

.scroll { display: flex; flex: none; background: #f7f6f1; }
.scroll button, .mini button { display: flex; align-items: center; justify-content: center; width: 16px; height: 15px; border: 1px solid #fff; border-radius: 2px; background: #c3d3fb; }
.scroll button svg, .mini svg { width: 14px; height: 14px; }
.thumb { border: 1px solid #93aadf; border-radius: 2px; }
.scroll.v { flex-direction: column; align-items: center; justify-content: space-between; width: 17px; }
.v .thumb { width: 15px; height: 17px; margin-top: 36px; background: repeating-linear-gradient(#c3d3fb 0 1px, #e6eeff 1px 2px); }
.scroll.h { align-items: center; justify-content: space-between; }
.h .thumb { width: 15px; height: 13px; background: repeating-linear-gradient(90deg, #c3d3fb 0 1px, #e6eeff 1px 2px); }

.tabs { display: flex; flex: none; height: 16px; margin-bottom: 5px; }
.nav { width: 18px; border-right: 1px solid #c8c5b5; }
.nav svg { width: 18px; height: 16px; fill: #000; }
.tab { position: relative; z-index: 0; padding: 0 6px; font-size: 11px; }
.tab::before, .tab::after { content: ""; position: absolute; z-index: -1; top: 0; bottom: 0; border: 0 solid #000; border-bottom-width: 1px; }
.tab::before { left: 0; right: 25%; border-left-width: 1px; transform: skewX(20deg); }
.tab::after { left: 25%; right: 0; border-right-width: 1px; transform: skewX(-20deg); }
.tab.on { color: #fff; margin-left: 5px; }
.tab.on::before, .tab.on::after { background: #000; }
.tabs .scroll { width: 33%; margin: 0 18px 0 auto; }
.tabs .thumb { margin-left: 54px; }

/* command window */
.command { display: flex; flex: none; gap: 3px; padding: 5px 7px 2px 6px; border-top: 2px solid #000; border-bottom: 1px solid #aca899; }
.cgrip { width: 8px; margin: 3px 0; border: solid #aca899; border-width: 0 1px; background: linear-gradient(90deg, #fff 1px, transparent 1px, transparent 3px, #aca899 3px, #aca899 4px, #fff 4px, #fff 5px, transparent 5px); }
.cbox { flex: 1; border: solid #000; border-width: 2px 0 0 1px; background: #fff; font: 13px/13px "Liberation Mono", monospace; }
.history { display: flex; justify-content: space-between; height: 32px; border-bottom: 1px solid #aca899; }
.history pre { margin: 0; padding: 0 1px; font: inherit; }
.mini { display: flex; flex-direction: column; gap: 1px; }
.prompt { display: flex; align-items: center; height: 17px; }
.prompt label { padding-left: 1px; }
.prompt input { flex: 1; min-width: 0; outline: 0; }
.prompt .scroll { width: 68px; margin-right: 17px; justify-content: flex-start; gap: 1px; }
.prompt .scroll button:last-child { margin-left: auto; }

/* status bar */
.status { display: flex; align-items: center; flex: none; gap: 3px; height: 22px; padding: 1px 0 1px 5px; }
.status output { width: 239px; padding: 3px 1px; height: 19px; border: 1px solid; border-color: #aca899 #fff #fff #aca899; }
.status > button { height: 19px; padding: 0 1px; border: 1px solid; border-color: #fff #aca899 #aca899 #fff; }
.status > .in { border-color: #000 #fff #fff #000; }
.comm { display: flex; margin-left: auto; }
.comm svg { width: 18px; height: 18px; }

/* taskbar */
.taskbar { display: flex; align-items: stretch; flex: none; height: 30px; color: #fff; background: linear-gradient(#3b80f0 0, #2866de 4px, #245edb 24px, #1a44a8 30px); }
.start { display: flex; align-items: center; gap: 5px; width: 97px; padding-left: 10px; border-radius: 0 10px 10px 0; background: linear-gradient(#6db966 0, #3f9a3e 4px, #3b9a3a 22px, #2a7a2a 30px); font: italic bold 16px "Open Sans", "Noto Sans", sans-serif; text-shadow: 1px 1px 1px #1d4a1c; }
.start svg { width: 19px; height: 19px; }
.tasks { display: flex; flex: 1; gap: 1px; padding: 2px 0 3px 10px; }
.tasks button { display: flex; align-items: center; gap: 5px; flex: 1; min-width: 0; max-width: 150px; padding: 0 4px 0 9px; border-radius: 3px; background: linear-gradient(#62a0fb, #3c80f2 4px, #3a7bee 22px, #2b65d8); font-size: 11px; white-space: nowrap; }
.tasks .on { background: #1c4eb4; box-shadow: inset 1px 1px 2px #0d2f7c; }
.tasks svg { width: 16px; height: 16px; }
.tasks b { color: #ffdf8d; }
.more { margin-left: auto; border: 3px solid transparent; border-top-color: #fff; border-bottom: 0; }
.lang { align-self: center; padding: 0 13px 0 9px; }
.tray { display: flex; align-items: center; gap: 2px; padding-right: 13px; background: linear-gradient(#1ba6f0 0, #1193e8 5px, #1095ea 24px, #0d6fc0 30px); }
.tray svg { width: 16px; height: 18px; }
.hide { margin-left: -8px; }
.hide svg { width: 18px; }
.tray time { padding-left: 6px; }
```
